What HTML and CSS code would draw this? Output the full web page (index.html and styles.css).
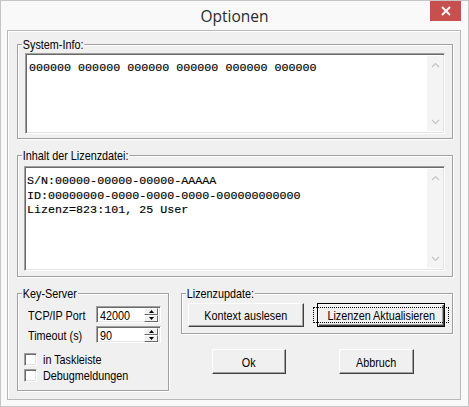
FILE: index.html
```html
<!DOCTYPE html>
<html>
<head>
<meta charset="utf-8">
<link rel="stylesheet" href="styles.css">
</head>
<body>
<div class="window">
  <div class="titlebar">
    <span class="title">Optionen</span>
    <div class="close"><svg width="10" height="10" viewBox="0 0 10 10"><path d="M1 1 L9 9 M9 1 L1 9" stroke="#fff" stroke-width="1.8"/></svg></div>
  </div>
  <div class="client">
    <div class="group g-sys">
      <span class="legend n">System-Info:</span>
      <div class="memo m-sys">
        <div class="memo-text">000000 000000 000000 000000 000000 000000</div>
        <div class="vscroll">
          <svg width="9" height="6" viewBox="0 0 9 6"><path d="M1 5 L4.5 1.5 L8 5" fill="none" stroke="#c4c4c4" stroke-width="1.2"/></svg>
          <svg width="9" height="6" viewBox="0 0 9 6"><path d="M1 1 L4.5 4.5 L8 1" fill="none" stroke="#c4c4c4" stroke-width="1.2"/></svg>
        </div>
      </div>
    </div>
    <div class="group g-lic">
      <span class="legend n">Inhalt der Lizenzdatei:</span>
      <div class="memo m-lic">
        <div class="memo-text">S/N:00000-00000-00000-AAAAA<br>ID:00000000-0000-0000-0000-000000000000<br>Lizenz=823:101, 25 User</div>
        <div class="vscroll">
          <svg width="9" height="6" viewBox="0 0 9 6"><path d="M1 5 L4.5 1.5 L8 5" fill="none" stroke="#c4c4c4" stroke-width="1.2"/></svg>
          <svg width="9" height="6" viewBox="0 0 9 6"><path d="M1 1 L4.5 4.5 L8 1" fill="none" stroke="#c4c4c4" stroke-width="1.2"/></svg>
        </div>
      </div>
    </div>
    <div class="bottom">
      <div class="group g-key">
        <span class="legend n">Key-Server</span>
        <div class="field f-first">
          <span class="flabel"><span class="n">TCP/IP Port</span></span>
          <div class="spin">
            <span class="spin-val"><span class="n">42000</span></span>
            <div class="spin-btns">
              <div class="sbtn"><svg width="7" height="4" viewBox="0 0 7 4"><path d="M0 4 L3.5 0 L7 4Z" fill="#000"/></svg></div>
              <div class="sbtn"><svg width="7" height="4" viewBox="0 0 7 4"><path d="M0 0 L3.5 4 L7 0Z" fill="#000"/></svg></div>
            </div>
          </div>
        </div>
        <div class="field">
          <span class="flabel"><span class="n">Timeout (s)</span></span>
          <div class="spin">
            <span class="spin-val"><span class="n">90</span></span>
            <div class="spin-btns">
              <div class="sbtn"><svg width="7" height="4" viewBox="0 0 7 4"><path d="M0 4 L3.5 0 L7 4Z" fill="#000"/></svg></div>
              <div class="sbtn"><svg width="7" height="4" viewBox="0 0 7 4"><path d="M0 0 L3.5 4 L7 0Z" fill="#000"/></svg></div>
            </div>
          </div>
        </div>
        <div class="check c-first"><span class="box"></span><span class="n">in Taskleiste</span></div>
        <div class="check"><span class="box"></span><span class="n">Debugmeldungen</span></div>
      </div>
      <div class="rightcol">
        <div class="group g-upd">
          <span class="legend n">Lizenzupdate:</span>
          <div class="btn b-ctx"><span class="n c">Kontext auslesen</span></div>
          <div class="btn b-akt default"><span class="focus"><span class="n c">Lizenzen Aktualisieren</span></span></div>
        </div>
        <div class="actions">
          <div class="btn b-ok"><span class="n c">Ok</span></div>
          <div class="btn b-cancel"><span class="n c">Abbruch</span></div>
        </div>
      </div>
    </div>
  </div>
</div>
</body>
</html>
```

FILE: styles.css
```css
* { box-sizing: border-box; }
html, body { margin: 0; padding: 0; }
body {
  width: 469px;
  height: 407px;
  overflow: hidden;
  background: #fff;
  font-family: "Liberation Sans", Arial, sans-serif;
  font-size: 13.5px;
  color: #000;
}
.n {
  display: inline-block;
  white-space: nowrap;
  transform: scaleX(0.8);
  transform-origin: left center;
}
.n.c { transform-origin: center center; }
.window {
  width: 469px;
  height: 407px;
  background: #f9f9f9;
  border: 1px solid #c6c6c6;
  display: flex;
  flex-direction: column;
}
.titlebar {
  height: 29px;
  position: relative;
  display: flex;
  justify-content: center;
  align-items: center;
}
.title {
  font-family: "Open Sans", "Noto Sans", sans-serif;
  font-size: 15.5px;
  color: #2b2b2b;
  margin-top: 1px;
}
.close {
  position: absolute;
  top: 0;
  right: 7px;
  width: 31px;
  height: 20px;
  background: #c7504f;
  display: flex;
  align-items: center;
  justify-content: center;
}
.client {
  margin: 0 7px 0 6px;
  height: 370px;
  background: #f0f0f0;
  border: 1px solid #b9b9b9;
  box-shadow: inset 1px 1px #fff;
  padding: 13px 7px 0 9px;
  display: flex;
  flex-direction: column;
}
.group {
  position: relative;
  border: 1px solid #a0a0a0;
  box-shadow: inset 1px 1px #fff, 1px 1px #fff;
}
.legend {
  position: absolute;
  top: -8px;
  left: 4px;
  background: #f0f0f0;
  padding: 0 1px;
  line-height: 15px;
}
.g-sys {
  height: 95px;
  padding: 8px 7px 0 7px;
}
.g-lic {
  height: 122px;
  margin-top: 16px;
  padding: 10px 7px 0 6px;
}
.memo {
  background: #fff;
  border: 1px solid;
  border-color: #a0a0a0 #fff #fff #a0a0a0;
  box-shadow: inset 1px 1px #696969, inset -1px -1px #e3e3e3;
  display: flex;
  padding: 2px 1px 2px 2px;
}
.m-sys { height: 81px; }
.m-lic { height: 105px; }
.memo-text {
  flex: 1;
  font-family: "Liberation Mono", "Courier New", monospace;
  font-size: 11.7px;
  line-height: 14.5px;
  padding: 5px 0 0 1px;
  color: #000;
  white-space: nowrap;
  -webkit-text-stroke: 0.15px #000;
}
.m-lic .memo-text { padding-left: 0; }
.vscroll {
  width: 16px;
  background: #f4f4f4;
  display: flex;
  flex-direction: column;
  justify-content: space-between;
  align-items: center;
  padding: 6px 0 6px;
}
.bottom {
  margin-top: 16px;
  display: flex;
  gap: 12px;
  align-items: flex-start;
}
.g-key {
  width: 152px;
  height: 98px;
  padding: 12px 0 0 6px;
}
.field {
  display: flex;
  align-items: center;
  height: 17px;
}
.field + .field { margin-top: 3px; }
.flabel {
  width: 72px;
  padding-left: 4px;
  padding-top: 2px;
}
.spin {
  width: 65px;
  height: 17px;
  background: #fff;
  border: 1px solid;
  border-color: #a0a0a0 #fff #fff #a0a0a0;
  box-shadow: inset 1px 1px #696969, inset -1px -1px #e3e3e3;
  display: flex;
  align-items: center;
  padding: 1px 2px 1px 3px;
}
.spin-val { flex: 1; padding-top: 1px; }
.spin-btns {
  display: flex;
  flex-direction: column;
  width: 14px;
  height: 14px;
}
.sbtn {
  flex: 1;
  background: #f0f0f0;
  border: 1px solid;
  border-color: #fff #696969 #696969 #fff;
  display: flex;
  align-items: center;
  justify-content: center;
}
.sbtn svg { width: 5px; height: 3px; }
.check {
  display: flex;
  align-items: center;
  gap: 6px;
  height: 13px;
}
.c-first { margin-top: 10px; }
.check + .check { margin-top: 3px; }
.box {
  width: 13px;
  height: 13px;
  background: #fff;
  border: 1px solid;
  border-color: #a0a0a0 #fff #fff #a0a0a0;
  box-shadow: inset 1px 1px #696969, inset -1px -1px #e3e3e3;
}
.rightcol {
  width: 272px;
  display: flex;
  flex-direction: column;
}
.g-upd {
  height: 41px;
  display: flex;
  gap: 13px;
  padding: 9px 0 0 6px;
  align-items: flex-start;
}
.btn {
  background: #f0f0f0;
  border: 1px solid;
  border-color: #fff #404040 #404040 #fff;
  box-shadow: inset -1px -1px #a0a0a0;
  display: flex;
  align-items: center;
  justify-content: center;
  padding-top: 1px;
}
.b-ctx { width: 116px; height: 24px; }
.b-akt { width: 128px; height: 24px; }
.default {
  border: 1px solid #000;
  box-shadow: inset 1px 1px #fff, inset -1px -1px #404040, inset -2px -2px #a0a0a0;
  padding: 3px;
}
.focus {
  flex: 1;
  align-self: stretch;
  border: 1px dotted #000;
  display: flex;
  align-items: center;
  justify-content: center;
}
.actions {
  display: flex;
  margin-top: 15px;
  padding-left: 31px;
  gap: 53px;
}
.b-ok { width: 74px; height: 25px; }
.b-cancel { width: 75px; height: 25px; }
```
